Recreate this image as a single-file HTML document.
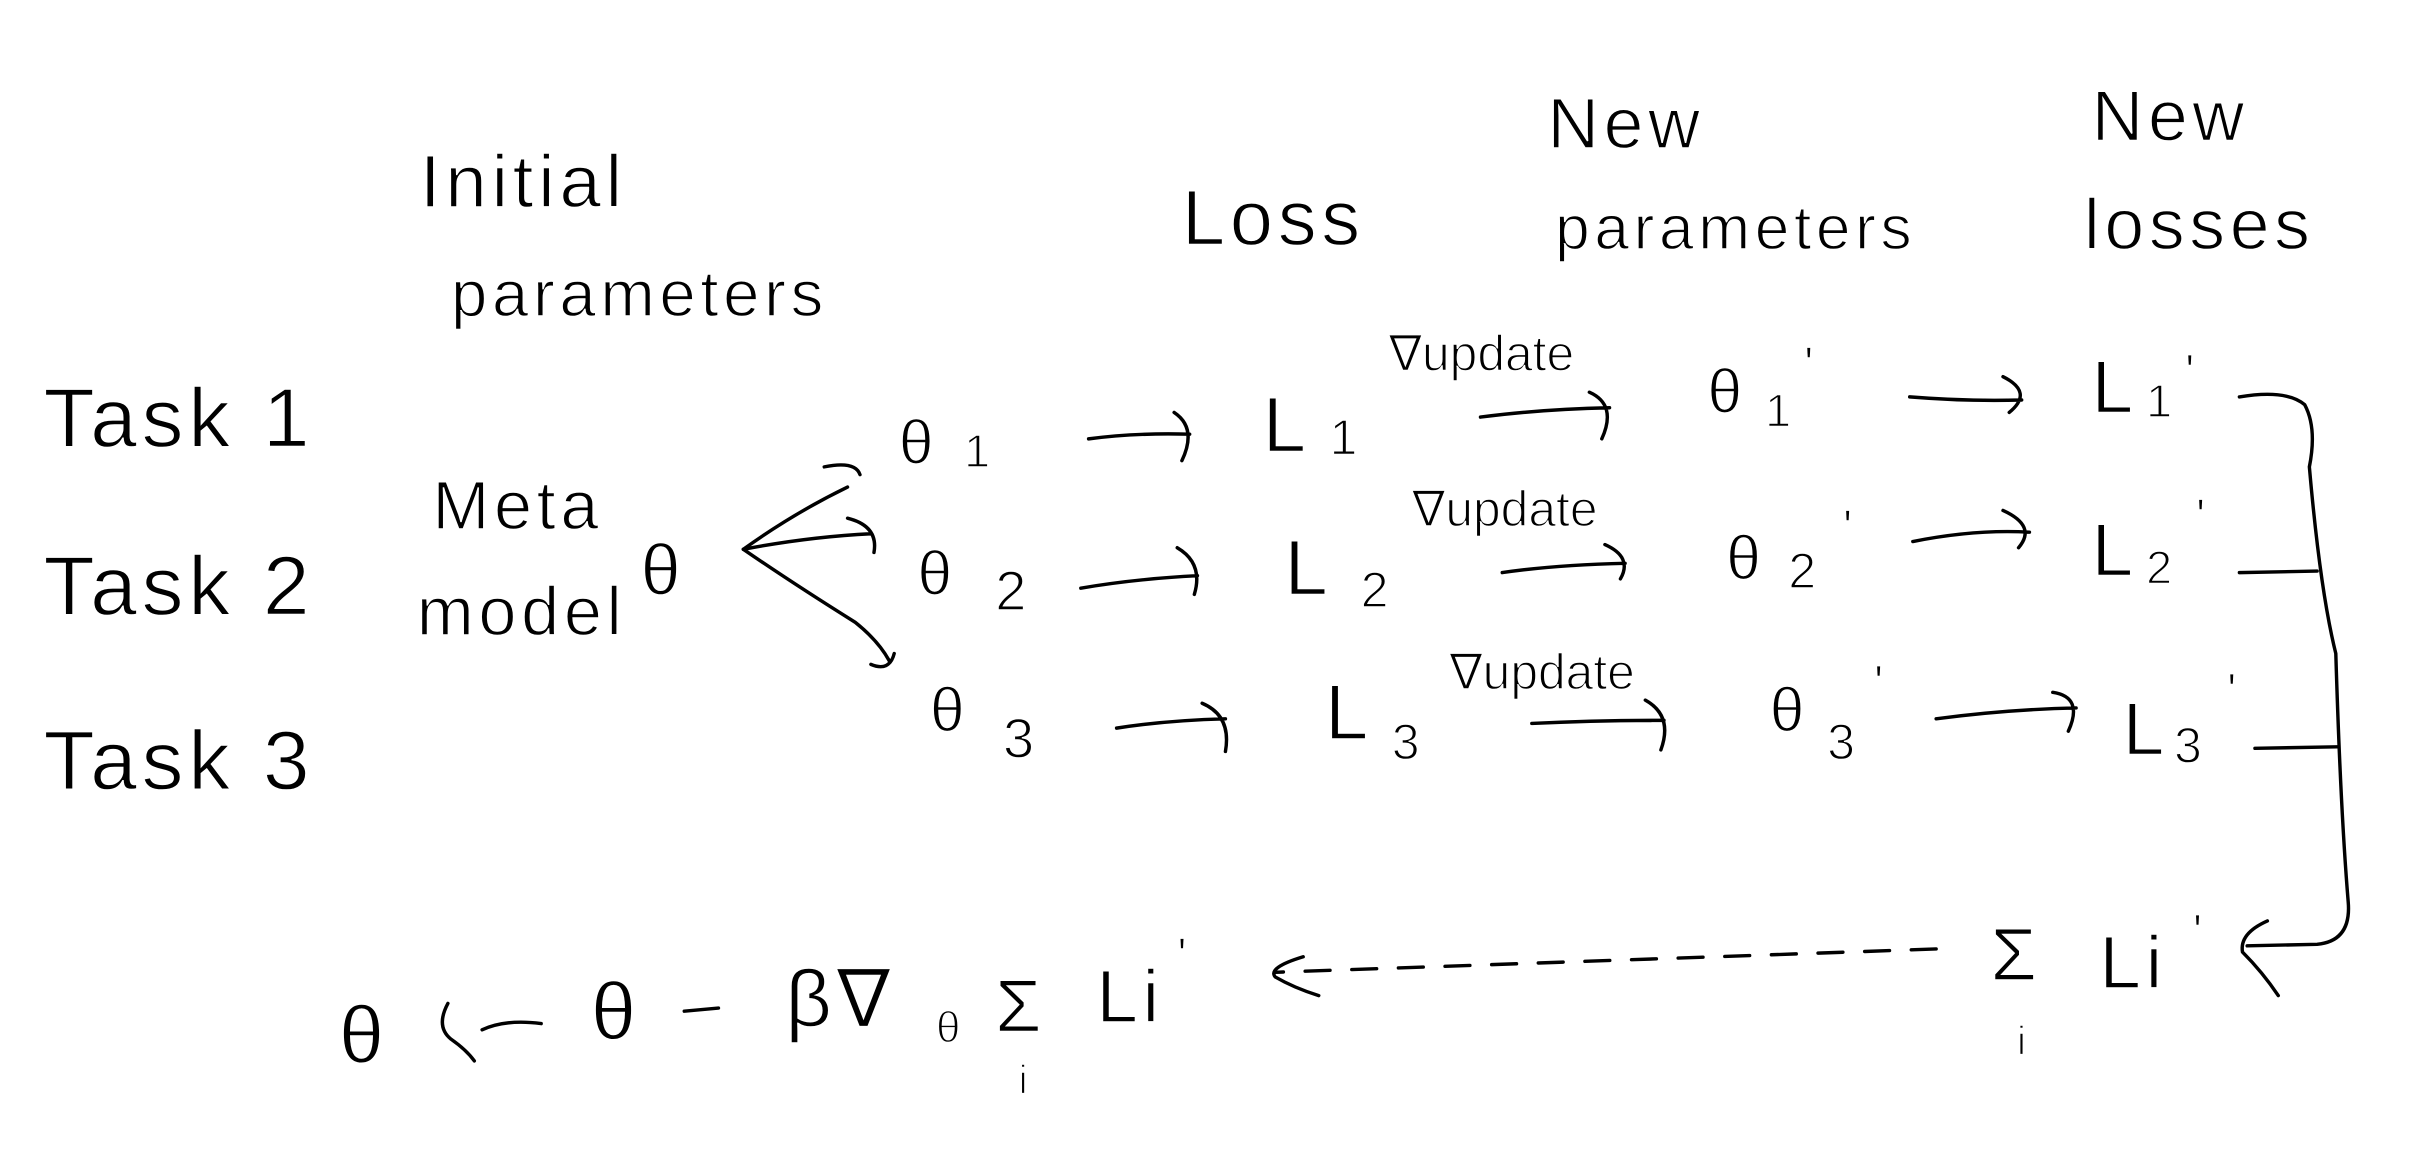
<!DOCTYPE html>
<html><head><meta charset="utf-8"><style>
html,body{margin:0;padding:0;background:#fff;}
svg{display:block;}
text{font-family:"Liberation Sans","DejaVu Sans",sans-serif;fill:#000;font-weight:normal;stroke:#fff;stroke-width:0.9px;paint-order:normal;}
</style></head><body>
<svg width="2426" height="1167" viewBox="0 0 1560 750" xmlns="http://www.w3.org/2000/svg">
<g font-size="48" style="letter-spacing:3px">
<text x="270" y="133">Initial</text>
<text x="290" y="203" font-size="42">parameters</text>
<text x="760" y="157" font-size="50">Loss</text>
<text x="995" y="95" font-size="46">New</text>
<text x="1000" y="160" font-size="40">parameters</text>
<text x="1345" y="90" font-size="46">New</text>
<text x="1340" y="160" font-size="46">losses</text>
<text x="28" y="287" font-size="54">Task 1</text>
<text x="28" y="395" font-size="54">Task 2</text>
<text x="28" y="507" font-size="54">Task 3</text>
<text x="278" y="340" font-size="44">Meta</text>
<text x="268" y="408" font-size="44">model</text>
<text x="412" y="382" font-size="46">θ</text>
<text x="578" y="298" font-size="40">θ</text><text x="620" y="300" font-size="30">1</text>
<text x="590" y="382" font-size="40">θ</text><text x="640" y="392" font-size="36">2</text>
<text x="598" y="470" font-size="40">θ</text><text x="645" y="487" font-size="36">3</text>
<text x="812" y="290" font-size="50">L</text><text x="855" y="292" font-size="32">1</text>
<text x="826" y="382" font-size="50">L</text><text x="875" y="390" font-size="32">2</text>
<text x="852" y="475" font-size="50">L</text><text x="895" y="488" font-size="32">3</text>
<text x="893" y="238" font-size="32" style="letter-spacing:0">∇update</text>
<text x="908" y="338" font-size="32" style="letter-spacing:0">∇update</text>
<text x="932" y="443" font-size="32" style="letter-spacing:0">∇update</text>
<text x="1098" y="265" font-size="40">θ</text><text x="1135" y="274" font-size="30">1</text><text x="1160" y="245" font-size="32">'</text>
<text x="1110" y="372" font-size="40">θ</text><text x="1150" y="378" font-size="32">2</text><text x="1185" y="350" font-size="32">'</text>
<text x="1138" y="470" font-size="40">θ</text><text x="1175" y="488" font-size="32">3</text><text x="1205" y="450" font-size="32">'</text>
<text x="1345" y="265" font-size="48">L</text><text x="1380" y="268" font-size="30">1</text><text x="1405" y="250" font-size="32">'</text>
<text x="1345" y="370" font-size="48">L</text><text x="1380" y="375" font-size="30">2</text><text x="1412" y="343" font-size="32">'</text>
<text x="1365" y="485" font-size="48">L</text><text x="1398" y="490" font-size="32">3</text><text x="1432" y="455" font-size="32">'</text>
<text x="1280" y="630" font-size="48">Σ</text><text x="1297" y="678" font-size="26">i</text>
<text x="1350" y="635" font-size="48">Li</text><text x="1410" y="610" font-size="32">'</text>
<text x="218" y="683" font-size="52">θ</text>
<text x="380" y="668" font-size="52">θ</text>
<text x="505" y="660" font-size="52">β∇</text><text x="602" y="670" font-size="28">θ</text>
<text x="640" y="663" font-size="48">Σ</text><text x="655" y="703" font-size="26">i</text>
<text x="705" y="657" font-size="48">Li</text><text x="757" y="625" font-size="32">'</text>
</g>
<g fill="none" stroke="#000" stroke-width="2.2" stroke-linecap="round" stroke-linejoin="round">
<path d="M478 353 Q510 330 545 313 M530 300 Q550 296 553 305"/>
<path d="M478 353 Q520 345 560 343 M545 333 Q565 338 562 355"/>
<path d="M478 353 Q510 375 550 400 Q565 412 572 425 M560 427 Q572 432 575 420"/>
<path d="M700 282 Q730 278 765 279 M755 265 Q770 275 760 296"/>
<path d="M695 378 Q730 372 770 370 M757 352 Q774 362 768 382"/>
<path d="M718 468 Q750 463 788 462 M773 452 Q792 460 788 483"/>
<path d="M952 268 Q990 263 1035 262 M1022 252 Q1040 260 1030 282"/>
<path d="M966 368 Q1000 363 1045 362 M1032 350 Q1050 358 1042 372"/>
<path d="M985 465 Q1025 463 1070 463 M1058 450 Q1076 460 1068 482"/>
<path d="M1228 255 Q1265 258 1300 257 M1288 242 Q1308 252 1292 265"/>
<path d="M1230 348 Q1270 340 1305 342 M1288 328 Q1310 338 1298 352"/>
<path d="M1245 462 Q1290 456 1335 455 M1320 445 Q1340 448 1330 470"/>
<path d="M1440 255 Q1470 250 1482 260 Q1490 275 1485 300 Q1492 380 1502 420 Q1505 520 1510 580 Q1512 605 1490 607 L1445 608"/>
<path d="M1458 592 Q1440 600 1442 612 Q1455 625 1465 640"/>
<path d="M1440 368 L1490 367"/>
<path d="M1450 481 L1503 480"/>
<path d="M1245 610 L820 625" stroke-dasharray="16 14"/>
<path d="M838 615 Q815 622 820 628 Q832 635 848 640"/>
<path d="M288 645 Q280 660 290 668 Q300 675 305 682 M310 662 Q325 655 348 658"/>
<path d="M440 650 L462 648"/>
</g>
</svg>
</body></html>
